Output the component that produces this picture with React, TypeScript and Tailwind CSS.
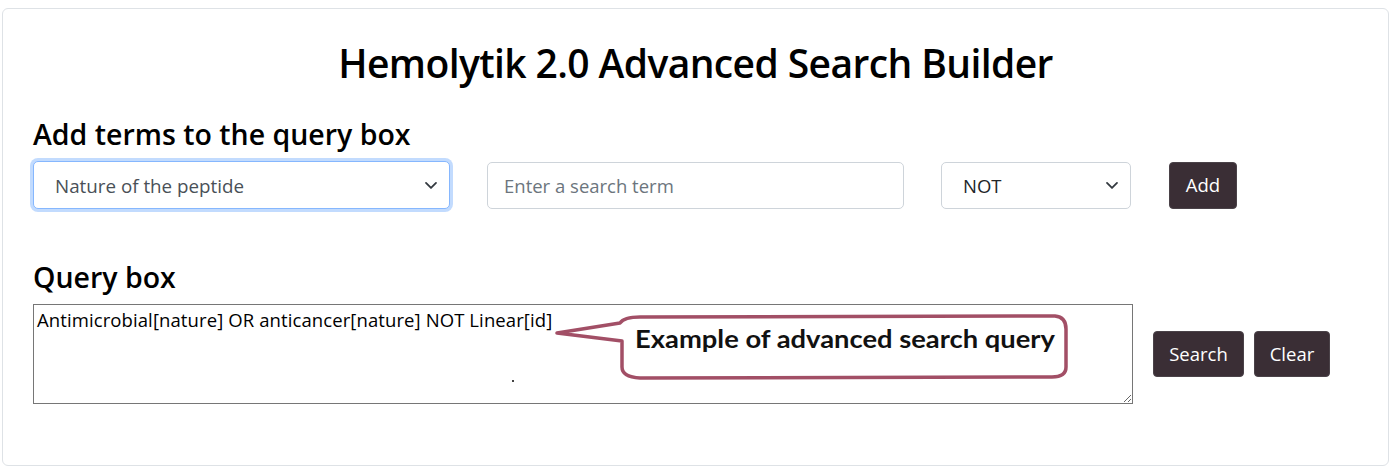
import React from "react";

const Chevron = () => (
  <svg className="pointer-events-none absolute right-[12px] top-1/2 -translate-y-1/2" width="14" height="10" viewBox="0 0 16 12">
    <path d="M2 3.5l6 6 6-6" fill="none" stroke="#343a40" strokeWidth="2.2" strokeLinecap="round" strokeLinejoin="round" />
  </svg>
);

export default function App() {
  const font = { fontFamily: '"Open Sans", "Noto Sans", sans-serif' };
  return (
    <div className="w-[1393px] h-[472px] bg-white pt-[8px] pl-[2px]" style={font}>
      <div className="w-[1387px] h-[458px] border border-[#dee2e6] rounded-[6px] pl-[30px] pt-[30px] flex flex-col">
        <h1 className="text-[39px] leading-[48px] font-semibold text-black text-center pr-[30px] tracking-[-0.6px]">
          Hemolytik 2.0 Advanced Search Builder
        </h1>
        <h3 className="mt-[30px] text-[28.5px] leading-[34px] font-semibold text-black">
          Add terms to the query box
        </h3>
        <div className="mt-[10px] flex items-center">
          <div className="relative w-[417px] h-[48px]">
            <select
              defaultValue="nature"
              className="appearance-none w-full h-full rounded-[5px] border border-[#86b7fe] shadow-[0_0_0_3px_rgba(13,110,253,0.25)] bg-white pl-[21px] pt-[2px] text-[18.8px] text-[#495057] outline-none"
              style={font}
            >
              <option value="nature">Nature of the peptide</option>
            </select>
            <Chevron />
          </div>
          <input
            placeholder="Enter a search term"
            className="ml-[37px] w-[417px] h-[47px] rounded-[5px] border border-[#ced4da] bg-white pl-[16px] pt-[1px] text-[18.5px] text-[#495057] placeholder:text-[#6c757d] outline-none"
            style={font}
          />
          <div className="relative ml-[37px] w-[190px] h-[47px]">
            <select
              defaultValue="NOT"
              className="appearance-none w-full h-full rounded-[5px] border border-[#ced4da] bg-white pl-[21px] pt-[2px] text-[18.5px] text-[#212529] outline-none"
              style={font}
            >
              <option value="NOT">NOT</option>
            </select>
            <Chevron />
          </div>
          <button
            className="ml-[38px] w-[68px] h-[47px] rounded-[4px] bg-[#3a2e35] border border-[#4a4248] text-white text-[18.5px]"
            style={font}
          >
            Add
          </button>
        </div>
        <h3 className="mt-[51px] text-[28.5px] leading-[34px] font-semibold text-black">
          Query box
        </h3>
        <div className="mt-[10px] flex items-start">
          <div className="relative w-[1100px] h-[100px]">
            <textarea
              defaultValue="Antimicrobial[nature] OR anticancer[nature] NOT Linear[id]"
              className="block w-full h-full border border-[#767676] px-[3px] py-[4px] text-[18.5px] leading-[22px] text-black outline-none resize-y tracking-[0.1px]"
              style={font}
            />
            <svg className="pointer-events-none absolute left-0 top-0" width="1100" height="100">
              <path
                d="M524,29 L587,19 Q591,13 607,13 L1022,12 Q1033,13 1033,25 L1033,63 Q1033,73 1019,73 L607,74 Q589,73 589,63 L589,37 Z"
                fill="white"
                stroke="#a24f66"
                strokeWidth="3.5"
                strokeLinejoin="round"
              />
              <text
                x="602"
                y="44"
                fontFamily="Lato, 'Open Sans', sans-serif"
                fontWeight="700"
                fontSize="25"
                fill="#111"
                textLength="420"
                lengthAdjust="spacingAndGlyphs"
              >
                Example of advanced search query
              </text>
            </svg>
            <span className="absolute left-[479px] top-[76px] w-[2px] h-[2px] bg-[#444]" />
          </div>
          <div className="ml-[20px] mt-[27px] flex gap-[10px]">
            <button
              className="w-[91px] h-[46px] rounded-[4px] bg-[#3a2e35] border border-[#4a4248] text-white text-[18.5px]"
              style={font}
            >
              Search
            </button>
            <button
              className="w-[76px] h-[46px] rounded-[4px] bg-[#3a2e35] border border-[#4a4248] text-white text-[18.5px]"
              style={font}
            >
              Clear
            </button>
          </div>
        </div>
      </div>
    </div>
  );
}
